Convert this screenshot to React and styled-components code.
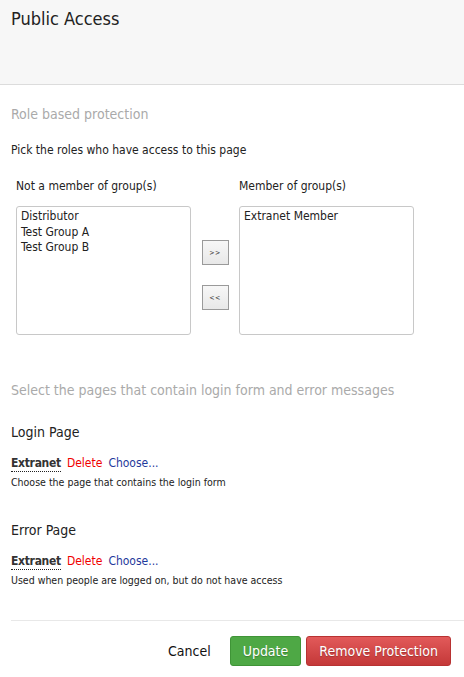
import React from "react";
import styled, { createGlobalStyle } from "styled-components";

const Global = createGlobalStyle`
  html, body { margin: 0; padding: 0; background: #fff; }
  body { font-family: "DejaVu Sans Condensed", "DejaVu Sans", sans-serif; color: #222; }
  * { box-sizing: border-box; }
`;

const Header = styled.header`
  height: 85px;
  background: #f7f7f7;
  border-bottom: 1px solid #dcdcdc;
  padding: 8px 11px 0;
`;

const Title = styled.h1`
  margin: 0;
  font-size: 18px;
  line-height: 22px;
  font-weight: normal;
  color: #222;
`;

const Body = styled.main`
  padding-left: 11px;
`;

const SectionTitle = styled.h2`
  margin: ${p => p.$top}px 0 0;
  font-size: 14px;
  line-height: 17px;
  font-weight: normal;
  color: #aaa;
`;

const Text = styled.p`
  margin: ${p => p.$top}px 0 0;
  font-size: 12px;
  line-height: 15px;
`;

const Groups = styled.div`
  display: grid;
  grid-template-columns: 175px 48px 175px;
  margin-top: 21px;
  padding-left: 5px;
`;

const Column = styled.div`
  display: flex;
  flex-direction: column;
  gap: 12px;
`;

const ColLabel = styled.div`
  font-size: 12px;
  line-height: 15px;
`;

const ListBox = styled.ul`
  margin: 0;
  padding: 2px 4px;
  list-style: none;
  height: 129px;
  border: 1px solid #c8c8c8;
  border-radius: 3px;
  background: #fff;
`;

const Option = styled.li`
  font-size: 12px;
  line-height: 15.5px;
  color: #222;
`;

const Mover = styled.div`
  display: flex;
  flex-direction: column;
  align-items: center;
  gap: 20px;
  padding-top: 61px;
`;

const MoveButton = styled.button`
  width: 27px;
  height: 25px;
  padding: 0;
  border: 1.5px solid #9a9a9a;
  background: linear-gradient(#f7f7f7, #e8e8e8);
  font-family: inherit;
  font-size: 7px;
  letter-spacing: 0.5px;
  color: #333;
`;

const SubTitle = styled.h3`
  margin: ${p => p.$top}px 0 0;
  font-size: 14px;
  line-height: 17px;
  font-weight: normal;
  color: #222;
`;

const LinkRow = styled.div`
  display: flex;
  gap: 6px;
  margin-top: 15px;
  font-size: 12px;
  line-height: 15px;
`;

const PageName = styled.span`
  font-weight: bold;
  color: #333;
  letter-spacing: -0.3px;
  border-bottom: 1px dotted #222;
`;

const Action = styled.a`
  color: ${p => p.$color};
  text-decoration: none;
  cursor: pointer;
`;

const Hint = styled.p`
  margin: 4px 0 0;
  font-size: 10.5px;
  line-height: 13px;
  color: #222;
`;

const Divider = styled.hr`
  margin: 33px 0 0;
  border: 0;
  border-top: 1px solid #e8e8e8;
`;

const Footer = styled.footer`
  display: flex;
  justify-content: flex-end;
  align-items: center;
  gap: 5px;
  padding: 15px 13px 0 0;
`;

const CancelButton = styled.button`
  background: none;
  border: 0;
  font-family: inherit;
  font-size: 14px;
  color: #111;
  margin-right: 14px;
  padding: 0;
`;

const SolidButton = styled.button`
  height: 30px;
  padding: 0 ${p => p.$pad}px;
  border: 1px solid ${p => p.$border};
  border-radius: 3px;
  background: ${p => p.$bg};
  color: #fff;
  font-family: inherit;
  font-size: 14px;
  text-shadow: 0 1px 1px rgba(0,0,0,0.25);
`;

export default function App() {
  return (
    <>
      <Global />
      <Header>
        <Title>Public Access</Title>
      </Header>
      <Body>
        <SectionTitle $top={21}>Role based protection</SectionTitle>
        <Text $top={20}>Pick the roles who have access to this page</Text>
        <Groups>
          <Column>
            <ColLabel>Not a member of group(s)</ColLabel>
            <ListBox>
              <Option>Distributor</Option>
              <Option>Test Group A</Option>
              <Option>Test Group B</Option>
            </ListBox>
          </Column>
          <Mover>
            <MoveButton>&gt;&gt;</MoveButton>
            <MoveButton>&lt;&lt;</MoveButton>
          </Mover>
          <Column>
            <ColLabel>Member of group(s)</ColLabel>
            <ListBox>
              <Option>Extranet Member</Option>
            </ListBox>
          </Column>
        </Groups>
        <SectionTitle $top={47}>Select the pages that contain login form and error messages</SectionTitle>
        <SubTitle $top={25}>Login Page</SubTitle>
        <LinkRow>
          <PageName>Extranet</PageName>
          <Action $color="#f00000">Delete</Action>
          <Action $color="#1f3a9c">Choose...</Action>
        </LinkRow>
        <Hint>Choose the page that contains the login form</Hint>
        <SubTitle $top={33}>Error Page</SubTitle>
        <LinkRow>
          <PageName>Extranet</PageName>
          <Action $color="#f00000">Delete</Action>
          <Action $color="#1f3a9c">Choose...</Action>
        </LinkRow>
        <Hint>Used when people are logged on, but do not have access</Hint>
        <Divider />
        <Footer>
          <CancelButton>Cancel</CancelButton>
          <SolidButton $pad={12} $bg="#4ea845" $border="#3f9437">Update</SolidButton>
          <SolidButton $pad={12} $bg="linear-gradient(#e25a5a, #c43838)" $border="#b83232">Remove Protection</SolidButton>
        </Footer>
      </Body>
    </>
  );
}
